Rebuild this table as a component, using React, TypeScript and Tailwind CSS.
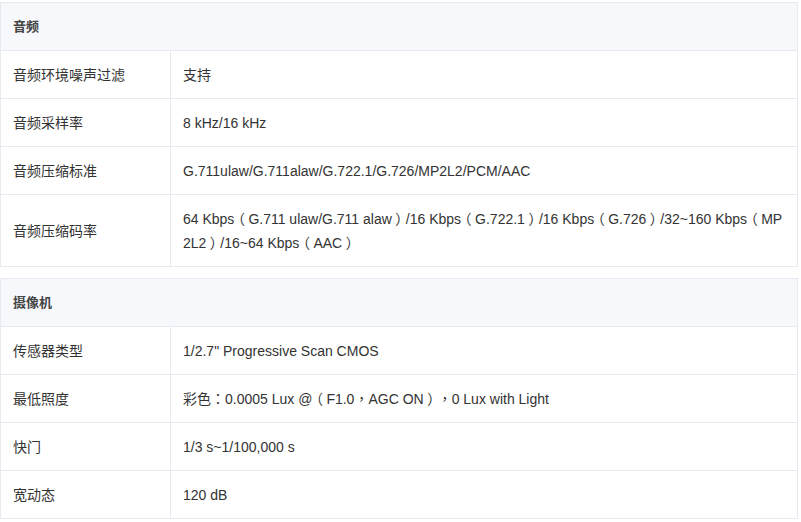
const sections = [
  {
    title: '音频',
    rows: [
      ['音频环境噪声过滤', '支持'],
      ['音频采样率', '8 kHz/16 kHz'],
      ['音频压缩标准', 'G.711ulaw/G.711alaw/G.722.1/G.726/MP2L2/PCM/AAC'],
      [
        '音频压缩码率',
        '64 Kbps（G.711 ulaw/G.711 alaw）/16 Kbps（G.722.1）/16 Kbps（G.726）/32~160 Kbps（MP2L2）/16~64 Kbps（AAC）',
      ],
    ],
  },
  {
    title: '摄像机',
    rows: [
      ['传感器类型', '1/2.7" Progressive Scan CMOS'],
      ['最低照度', '彩色：0.0005 Lux @（F1.0，AGC ON），0 Lux with Light'],
      ['快门', '1/3 s~1/100,000 s'],
      ['宽动态', '120 dB'],
    ],
  },
];

// brackets: half-width glyph centred in a full em box, as the original renders them
function Value({ text }: { text: string }) {
  return (
    <>
      {text.split(/([（）])/).map((part, i) =>
        part === '（' || part === '）' ? (
          <span key={i} className="inline-block w-[14px] text-center [font-feature-settings:'halt']">
            {part}
          </span>
        ) : (
          part
        ),
      )}
    </>
  );
}

export default function App() {
  return (
    <div className="w-[801px] h-[522px] bg-white pt-[2px] font-['Liberation_Sans','Noto_Sans_CJK_SC',sans-serif] text-[14px] text-[#333]">
      {sections.map((s) => (
        <table key={s.title} className="w-[798px] border-collapse table-fixed mb-[11px]">
          <colgroup>
            <col className="w-[170px]" />
            <col />
          </colgroup>
          <thead>
            <tr>
              <th
                colSpan={2}
                className="bg-[#f7f8fc] border border-[#e8eaf1] text-left text-[13px] font-bold px-3 py-[11.5px] leading-6 text-[#444]"
              >
                {s.title}
              </th>
            </tr>
          </thead>
          <tbody>
            {s.rows.map(([k, v]) => (
              <tr key={k}>
                <td className="border border-[#e8eaf1] px-3 py-[11.5px] leading-6 align-middle">{k}</td>
                <td className="border border-[#e8eaf1] px-3 py-[11.5px] leading-6 align-middle break-all font-['Liberation_Sans','Noto_Sans_CJK_TC',sans-serif]">
                  <Value text={v} />
                </td>
              </tr>
            ))}
          </tbody>
        </table>
      ))}
    </div>
  );
}
